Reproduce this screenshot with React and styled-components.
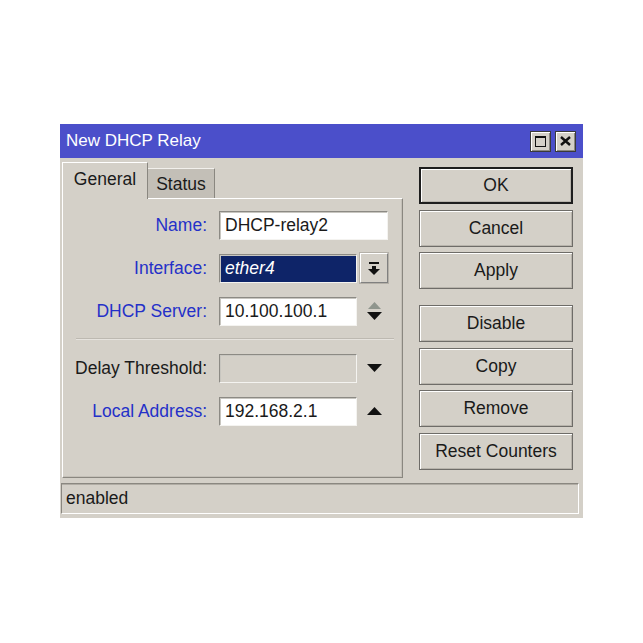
import React from "react";
import styled, { createGlobalStyle, css } from "styled-components";

const GlobalStyle = createGlobalStyle`
  html, body {
    margin: 0;
    padding: 0;
    background: #fff;
  }
  body {
    font-family: "Liberation Sans", Arial, sans-serif;
    font-size: 17.5px;
    color: #1a1a1a;
  }
`;

const Page = styled.div`
  width: 643px;
  height: 643px;
  padding: 124px 0 0 60px;
  box-sizing: border-box;
`;

const Window = styled.div`
  width: 523px;
  background: #d4d0c8;
  display: flex;
  flex-direction: column;
`;

const TitleBar = styled.div`
  height: 34px;
  background: #4b4fca;
  display: flex;
  align-items: center;
  justify-content: space-between;
  padding: 0 7px 0 6px;
`;

const Title = styled.span`
  color: #fff;
  font-size: 17px;
`;

const TitleButtons = styled.div`
  display: flex;
  gap: 4px;
`;

const TitleButton = styled.div`
  width: 21px;
  height: 21px;
  box-sizing: border-box;
  background: #d4d0c8;
  border: 1px solid #3a3a3a;
  box-shadow: inset 1px 1px #fff, inset -1px -1px #8a8780;
  display: flex;
  align-items: center;
  justify-content: center;
`;

const Body = styled.div`
  display: flex;
  gap: 16px;
  padding: 4px 9px 5px 2px;
`;

const LeftColumn = styled.div`
  width: 341px;
  display: flex;
  flex-direction: column;
`;

const TabStrip = styled.div`
  display: flex;
  align-items: flex-end;
  height: 36px;
`;

const Tab = styled.div`
  box-sizing: border-box;
  display: flex;
  align-items: center;
  justify-content: center;
  ${(p) =>
    p.active
      ? css`
          width: 86px;
          height: 37px;
          margin-bottom: -1px;
          background: #d4d0c8;
          border-top: 1px solid #fff;
          border-left: 1px solid #fff;
          border-right: 1px solid #8a8780;
          position: relative;
          z-index: 1;
          padding-bottom: 4px;
        `
      : css`
          width: 67px;
          height: 30px;
          background: #c3bfb7;
          border-top: 1px solid #f2f0ec;
          border-right: 1px solid #8a8780;
          padding-top: 2px;
        `}
`;

/* label | gap | field | gap | side control */
const Panel = styled.div`
  height: 280px;
  box-sizing: border-box;
  border: 1px solid;
  border-color: #fff #8a8780 #8a8780 #fff;
  box-shadow: inset -1px -1px #c4c0b8;
  padding: 12px 13px 0 1px;
  display: grid;
  grid-template-columns: 143px 12px 138px 3px 28px;
  row-gap: 13px;
  align-content: start;
  align-items: center;
`;

const Label = styled.label`
  grid-column: 1;
  text-align: right;
  white-space: nowrap;
  color: ${(p) => (p.plain ? "#1a1a1a" : "#2430c8")};
`;

const Input = styled.div`
  grid-column: ${(p) => (p.wide ? "3 / span 3" : "3")};
  height: 29px;
  box-sizing: border-box;
  border: 1px solid;
  border-color: #8c8a84 #f4f3f0 #f4f3f0 #8c8a84;
  box-shadow: inset 1px 1px #c8c6c0;
  background: ${(p) => (p.disabled ? "#d4d0c8" : "#fff")};
  padding: 0 5px;
  display: flex;
  align-items: center;
  white-space: nowrap;
  ${(p) =>
    p.selected &&
    css`
      background: #0e2468;
      color: #fff;
      font-style: italic;
    `}
`;

const Side = styled.div`
  grid-column: 5;
  display: flex;
  align-items: center;
  justify-content: center;
  height: 30px;
`;

const DropButton = styled.div`
  width: 28px;
  height: 30px;
  box-sizing: border-box;
  border: 1px solid;
  border-color: #fff #808080 #808080 #fff;
  box-shadow: 0 0 0 1px #b4b0a8;
  display: flex;
  align-items: center;
  justify-content: center;
`;

const Separator = styled.div`
  grid-column: 1 / -1;
  height: 1px;
  margin: -1px -6px 0 12px;
  background: #bdb9b1;
  border-bottom: 1px solid #e6e3de;
`;

const ButtonColumn = styled.div`
  width: 154px;
  padding-top: 5px;
  display: flex;
  flex-direction: column;
  gap: 5.7px;
`;

const Button = styled.div`
  height: 37px;
  box-sizing: border-box;
  display: flex;
  align-items: center;
  justify-content: center;
  background: #d4d0c8;
  border: 1px solid #6e6c68;
  box-shadow: inset 1px 1px #fff, inset -1px -1px #b8b4ac;
  ${(p) =>
    p.primary &&
    css`
      border: 2px solid #1e1e1e;
    `}
  ${(p) =>
    p.spaced &&
    css`
      margin-top: 10px;
    `}
`;

const StatusBar = styled.div`
  height: 31px;
  box-sizing: border-box;
  margin: 0 4px 4px 1px;
  border: 1px solid;
  border-color: #8a8780 #fff #fff #8a8780;
  box-shadow: inset 0 1px #b0aca4;
  padding: 0 4px;
  display: flex;
  align-items: center;
`;

const MaxIcon = () => (
  <svg width="11" height="11" viewBox="0 0 11 11">
    <rect x="0.5" y="0.5" width="10" height="10" fill="none" stroke="#111" />
    <rect x="0" y="0" width="11" height="2" fill="#111" />
  </svg>
);

const CloseIcon = () => (
  <svg width="11" height="10" viewBox="0 0 11 10">
    <path d="M1 1 L10 9 M10 1 L1 9" stroke="#111" strokeWidth="2.4" />
  </svg>
);

const DropIcon = () => (
  <svg width="12" height="13" viewBox="0 0 12 13">
    <rect x="1" y="0" width="10" height="2" fill="#111" />
    <rect x="4" y="4" width="4" height="3" fill="#111" />
    <polygon points="0,7 12,7 6,13" fill="#111" />
  </svg>
);

const Triangle = ({ up, color = "#111" }) => (
  <svg width="15" height="8" viewBox="0 0 15 8">
    <polygon points={up ? "0,8 15,8 7.5,0" : "0,0 15,0 7.5,8"} fill={color} />
  </svg>
);

const SpinIcon = () => (
  <svg width="15" height="18" viewBox="0 0 15 18">
    <polygon points="1,7 14,7 7.5,0" fill="#8f958d" />
    <polygon points="0,10 15,10 7.5,18" fill="#111" />
  </svg>
);

const buttons = [
  { text: "OK", primary: true },
  { text: "Cancel" },
  { text: "Apply" },
  { text: "Disable", spaced: true },
  { text: "Copy" },
  { text: "Remove" },
  { text: "Reset Counters" },
];

export default function App() {
  return (
    <Page>
      <GlobalStyle />
      <Window>
        <TitleBar>
          <Title>New DHCP Relay</Title>
          <TitleButtons>
            <TitleButton>
              <MaxIcon />
            </TitleButton>
            <TitleButton>
              <CloseIcon />
            </TitleButton>
          </TitleButtons>
        </TitleBar>
        <Body>
          <LeftColumn>
            <TabStrip>
              <Tab active>General</Tab>
              <Tab>Status</Tab>
            </TabStrip>
            <Panel>
              <Label>Name:</Label>
              <Input wide>DHCP-relay2</Input>

              <Label>Interface:</Label>
              <Input selected>ether4</Input>
              <Side>
                <DropButton>
                  <DropIcon />
                </DropButton>
              </Side>

              <Label>DHCP Server:</Label>
              <Input>10.100.100.1</Input>
              <Side>
                <SpinIcon />
              </Side>

              <Separator />

              <Label plain>Delay Threshold:</Label>
              <Input disabled />
              <Side>
                <Triangle />
              </Side>

              <Label>Local Address:</Label>
              <Input>192.168.2.1</Input>
              <Side>
                <Triangle up />
              </Side>
            </Panel>
          </LeftColumn>
          <ButtonColumn>
            {buttons.map((b) => (
              <Button key={b.text} primary={b.primary} spaced={b.spaced}>
                {b.text}
              </Button>
            ))}
          </ButtonColumn>
        </Body>
        <StatusBar>enabled</StatusBar>
      </Window>
    </Page>
  );
}
